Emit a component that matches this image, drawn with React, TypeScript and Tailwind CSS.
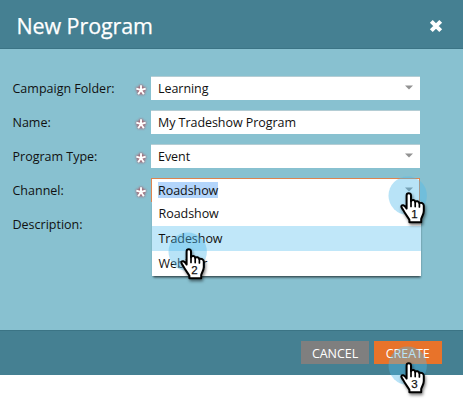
import React from "react";

function Required() {
  return (
    <svg width="14" height="14" viewBox="0 0 14 14" className="mr-[3px] mt-[7px] shrink-0 overflow-visible">
      <defs>
        <filter id="redGlow" x="-50%" y="-50%" width="200%" height="200%">
          <feGaussianBlur stdDeviation="1" />
        </filter>
      </defs>
      <g strokeLinecap="butt">
        <path d="M7 7V2M7 7L2.3 5.7M7 7L11.7 5.7M7 7L4.2 11.2M7 7L9.8 11.2" stroke="#b23b46" strokeWidth="3.4" opacity=".75" filter="url(#redGlow)" />
        <path d="M7 7V2.2M7 7L2.3 5.7M7 7L11.7 5.7M7 7L4.2 11.2M7 7L9.8 11.2" stroke="#fff" strokeWidth="1.9" />
      </g>
    </svg>
  );
}

function Arrow({ className }: { className: string }) {
  return (
    <svg width="8" height="5" viewBox="0 0 8 5" className={className}>
      <path d="M0 0.5H8L4 4.5Z" fill="#929292" />
    </svg>
  );
}

function Pointer({ step, className }: { step: number; className: string }) {
  return (
    <svg width="44" height="56" viewBox="-12 -16 44 56" className={"absolute pointer-events-none " + className}>
      <circle cx="7.7" cy="3.7" r="19.2" fill="#4db8ec" fillOpacity=".4" />
      <g style={{ filter: "drop-shadow(1px 2px 1.5px rgba(0,0,0,.5))" }}>
        <path
          d="M6.6 16.5V3.4C6.6 .4 11 .4 11 3.4V9.2C11.8 7.5 14.9 7.7 15.2 9.8C16.2 8.7 19 9.1 19.4 11.2C21 10.2 23.8 11.2 23.8 13.7V19C23.8 22.5 21.8 24.5 21.2 27V30.2H9.4V27.8C7.4 24.4 4.7 21.2 3.3 18.2C2.1 16.3 1.2 15.3 1.3 14.5C1.6 12.4 4.6 12.8 6.6 16.5Z"
          fill="#fff" stroke="#000" strokeWidth="2" strokeLinejoin="round"
        />
        <path d="M11 8.5V14.4M15.2 9.8V14.6M19.4 11.2V15" fill="none" stroke="#000" strokeWidth="1.7" strokeLinecap="round" />
      </g>
      <text x="14.4" y="26.2" textAnchor="middle" fontSize="11.5" fill="#111" stroke="#111" strokeWidth=".25" className="font-['Liberation_Sans',sans-serif]">
        {step}
      </text>
    </svg>
  );
}

function Row({ label, children }: { label: string; children?: React.ReactNode }) {
  return (
    <div className="flex h-[34px] items-start">
      <div className="w-[122px] shrink-0 pl-[0.5px] leading-[25px]">{label}</div>
      {children && <Required />}
      {children}
    </div>
  );
}

function Field({ value, arrow = true }: { value: string; arrow?: boolean }) {
  return (
    <div className="flex h-6 w-[269px] items-start justify-between border-t border-[#b4cdd4] bg-white pl-[7px]">
      <span className="leading-[23px] tracking-[-0.05px]">{value}</span>
      {arrow && <Arrow className="mr-[7px] mt-2" />}
    </div>
  );
}

export default function App() {
  return (
    <div className="relative h-[402px] w-[463px] overflow-hidden bg-white font-['Open_Sans',sans-serif] text-[12.5px] text-[#111]">
      <header className="flex h-[49px] items-center justify-between border-b border-[#3b7485] bg-[#458092] pl-[16.5px] pr-5 text-white">
        <h1 className="pt-[3px] text-[21.5px] leading-7 tracking-[-0.1px] [-webkit-text-stroke:0.25px_white]">New Program</h1>
        <svg width="14" height="14" viewBox="0 0 14 14" className="mt-[3px]">
          <path d="M2.3 2.3L11.7 11.7M11.7 2.3L2.3 11.7" stroke="#fff" strokeWidth="4" />
        </svg>
      </header>

      <main className="h-[281px] bg-[#88c1d0] pl-3 pt-[27px]">
        <Row label="Campaign Folder:"><Field value="Learning" /></Row>
        <Row label="Name:"><Field value="My Tradeshow Program" arrow={false} /></Row>
        <Row label="Program Type:"><Field value="Event" /></Row>
        <Row label="Channel:">
          <div className="relative">
            <div className="flex h-6 w-[269px] items-start justify-between border border-b-0 border-[#dc8450] bg-white pl-1.5">
              <span className="mt-[3px] h-4 bg-[#b3d5fb] leading-[17px] tracking-[-0.05px]">Roadshow</span>
              <Arrow className="mr-1.5 mt-2" />
            </div>
            <ul className="absolute left-px top-[23px] w-[269px] bg-white tracking-[-0.05px] shadow-[0_2px_2px_-1px_rgba(0,0,0,0.55),1px_3px_2px_-1px_rgba(0,0,0,0.25)]">
              <li className="h-[25px] pl-[6.5px] leading-[25px]">Roadshow</li>
              <li className="h-[25px] bg-[#c0e7f9] pl-[6.5px] leading-[25px]">Tradeshow</li>
              <li className="h-[25px] pl-[6.5px] leading-[25px]">Webinar</li>
            </ul>
          </div>
        </Row>
        <Row label="Description:" />
      </main>

      <footer className="flex h-[45px] items-start justify-end gap-[5px] border-t border-[#3b7485] bg-[#458092] pr-[21.5px] pt-[10px] text-white">
        <button className="h-[23px] w-[68px] bg-[#7f7f7f] pt-0.5 leading-[21px] tracking-[-0.05px]">CANCEL</button>
        <button className="h-[23px] w-[67.5px] bg-[#e8732a] pt-0.5 leading-[21px] tracking-[-0.05px]">CREATE</button>
      </footer>

      <Pointer step={1} className="left-[388px] top-[176px]" />
      <Pointer step={2} className="left-[168px] top-[232px]" />
      <Pointer step={3} className="left-[388px] top-[346px]" />
    </div>
  );
}
